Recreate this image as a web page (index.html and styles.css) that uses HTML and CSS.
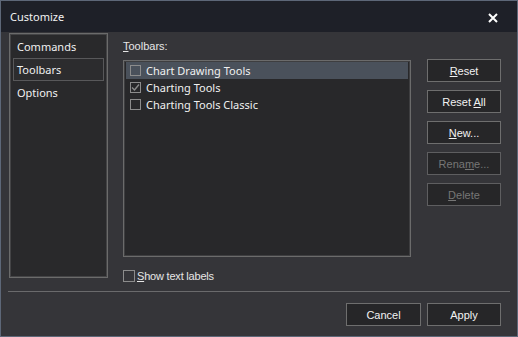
FILE: index.html
```html
<!DOCTYPE html>
<html lang="en">

<head>
    <meta charset="utf-8">
    <title>Customize</title>
    <link rel="stylesheet" href="styles.css">
</head>

<body>
    <div class="window">
        <div class="titlebar">
            <span class="title">Customize</span>
            <svg class="close" width="10" height="10" viewBox="0 0 10 10">
                <path d="M1 1L9 9M9 1L1 9" stroke="#ffffff" stroke-width="2" />
            </svg>
        </div>

        <div class="main">
            <div class="tabs">
                <div class="tab">Commands</div>
                <div class="tab active">Toolbars</div>
                <div class="tab">Options</div>
            </div>

            <div class="toolbars">
                <div class="label"><u>T</u>oolbars:</div>
                <div class="list">
                    <div class="row selected"><span class="check"></span>Chart Drawing Tools</div>
                    <div class="row"><span class="check checked">
                            <svg width="9" height="9" viewBox="0 0 9 9">
                                <path d="M1 4.5L3.5 7L8 1.5" fill="none" stroke="#8c8c8c" stroke-width="1.4" />
                            </svg>
                        </span>Charting Tools</div>
                    <div class="row"><span class="check"></span>Charting Tools Classic</div>
                </div>
                <label class="option"><span class="check"></span><u>S</u>how text labels</label>
            </div>

            <div class="actions">
                <button class="btn"><u>R</u>eset</button>
                <button class="btn">Reset <u>A</u>ll</button>
                <button class="btn"><u>N</u>ew...</button>
                <button class="btn" disabled>Rena<u>m</u>e...</button>
                <button class="btn" disabled><u>D</u>elete</button>
            </div>
        </div>

        <div class="separator"></div>

        <div class="footer">
            <button class="btn">Cancel</button>
            <button class="btn">Apply</button>
        </div>
    </div>
</body>

</html>
```

FILE: styles.css
```css
* {
    margin: 0;
    padding: 0;
    box-sizing: border-box;
}

body {
    font-family: "Noto Sans", "DejaVu Sans", sans-serif;
    background: #353539;
    color: #f0f0f0;
}

.window {
    width: 518px;
    height: 337px;
    border: 1px solid #5d6778;
    background: #353539;
    display: flex;
    flex-direction: column;
}

.titlebar {
    height: 31px;
    background: #1e2028;
    display: flex;
    align-items: center;
    justify-content: space-between;
    padding: 0 19px 0 9px;
}

.title {
    font-size: 11px;
    color: #f2f2f2;
}

.close {
    margin-top: 3px;
}

.main {
    height: 259px;
    display: flex;
    padding: 1px 0 0 8px;
}

.tabs {
    width: 99px;
    height: 245px;
    background: #29292b;
    border: 1px solid #6b6b6b;
    box-shadow: inset 0 0 0 1px #444446;
    padding: 1px 3px;
}

.tab {
    height: 23px;
    line-height: 21px;
    font-size: 11px;
    padding-left: 3px;
    border: 1px solid transparent;
}

.tab.active {
    border-color: #58585a;
    background: #2c2c2e;
}

.toolbars {
    width: 288px;
    margin-left: 15px;
    padding-top: 7px;
    font-family: "Liberation Sans", Arial, sans-serif;
}

.label {
    font-size: 11px;
    height: 15px;
    color: #e6e6e6;
    margin-bottom: 5px;
}

.list {
    height: 197px;
    background: #28282a;
    border: 1px solid #6b6b6b;
    box-shadow: inset 0 0 0 1px #3e3e40;
    padding: 1px 2px;
    font-family: "Noto Sans", "DejaVu Sans", sans-serif;
}

.row {
    height: 17px;
    display: flex;
    align-items: center;
    font-size: 11px;
    padding-left: 4px;
}

.row.selected {
    background: #4a515b;
}

.check {
    width: 11px;
    height: 11px;
    border: 1px solid #8c8c8c;
    margin-right: 5px;
    display: flex;
    align-items: center;
    justify-content: center;
}

.option {
    display: flex;
    align-items: center;
    margin-top: 13px;
    font-size: 11px;
    letter-spacing: -0.2px;
    color: #e6e6e6;
}

.option .check {
    width: 12px;
    height: 12px;
    margin-right: 2px;
}

.actions {
    display: flex;
    flex-direction: column;
    gap: 8px;
    margin-left: 16px;
    padding-top: 26px;
}

.btn {
    width: 74px;
    height: 23px;
    background: #262628;
    border: 1px solid #6e6e6e;
    color: #f2f2f2;
    font-family: "Liberation Sans", Arial, sans-serif;
    font-size: 11px;
}

.btn:disabled {
    color: #767676;
    border-color: #5e5e60;
}

.separator {
    height: 1px;
    background: #6a6a6c;
    margin: 0 7px;
}

.footer {
    display: flex;
    justify-content: flex-end;
    gap: 6px;
    padding: 11px 16px 0 0;
}

.footer .btn:first-child {
    width: 75px;
}
```
